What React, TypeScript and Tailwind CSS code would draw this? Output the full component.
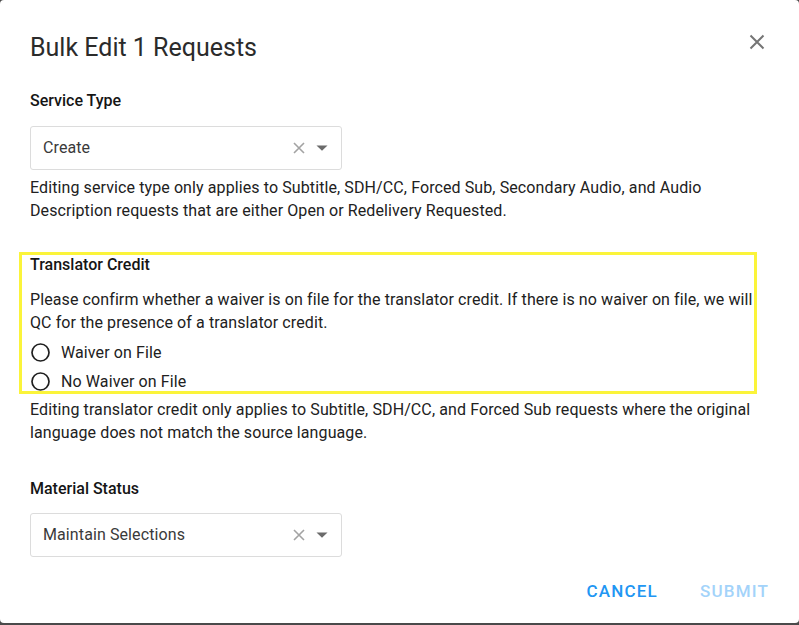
import React from "react";

function ClearIcon() {
  return (
    <svg width="12" height="12" viewBox="0 0 12 12" className="block">
      <path d="M1 1 L11 11 M11 1 L1 11" stroke="#a3a3a3" strokeWidth="1.6" fill="none" />
    </svg>
  );
}

function Arrow() {
  return (
    <svg width="12" height="6" viewBox="0 0 12 6" className="block">
      <path d="M0.5 0.5 L11.5 0.5 L6 5.8 Z" fill="#6b6b6b" />
    </svg>
  );
}

function Select({ value, className }: { value: string; className?: string }) {
  return (
    <div
      className={
        "flex h-[44px] w-[312px] items-center rounded-[3px] border border-[#dcdcdc] bg-white pl-[12px] pr-[13px] " +
        (className ?? "")
      }
    >
      <span className="flex-1 text-[16px] tracking-[0.1px] text-[#3a3a3a]">{value}</span>
      <span className="mr-[11px]">
        <ClearIcon />
      </span>
      <Arrow />
    </div>
  );
}

function Radio({ label }: { label: string }) {
  return (
    <label className="flex h-[29px] items-center">
      <svg width="21" height="21" viewBox="0 0 21 21" className="block">
        <circle cx="10.5" cy="10.5" r="8.5" stroke="#1f1f1f" strokeWidth="1.7" fill="none" />
      </svg>
      <span className="ml-[10px] text-[16px] leading-[29px] tracking-[0.1px] text-[#212121]">{label}</span>
    </label>
  );
}

export default function App() {
  return (
    <div className="h-[625px] w-[799px] overflow-hidden bg-[#4a4a4a] font-['Roboto',_'Liberation_Sans',_sans-serif]">
      <div className="relative h-[623px] rounded-[4px] bg-white px-[30px] pt-[32px]">
        <h2 className="text-[25px] font-normal leading-[32px] text-[#2b2b2b]">Bulk Edit 1 Requests</h2>
        <button className="absolute right-[30px] top-[30px] flex h-[24px] w-[24px] items-center justify-center">
          <svg width="24" height="24" viewBox="0 0 24 24" className="block">
            <path d="M5.5 5.5 L18.5 18.5 M18.5 5.5 L5.5 18.5" stroke="#757575" strokeWidth="2" fill="none" />
          </svg>
        </button>

        <div className="mt-[27px] text-[16px] font-medium leading-[20px] text-[#151515]">Service Type</div>
        <Select className="mt-[15px]" value="Create" />
        <p className="mt-[7px] text-[16px] leading-[22.88px] tracking-[0.1px] text-[#212121]">
          Editing service type only applies to Subtitle, SDH/CC, Forced Sub, Secondary Audio, and Audio Description
          requests that are either Open or Redelivery Requested.
        </p>

        <div className="relative mt-[32px]">
          <div className="pointer-events-none absolute -left-[11px] -top-[3px] bottom-[2px] right-[12px] border-[3px] border-[#fbf43a]" />
          <div className="text-[16px] font-medium leading-[20px] text-[#151515]">Translator Credit</div>
          <p className="mt-[14px] text-[16px] leading-[22.88px] tracking-[0.1px] text-[#212121]">
            Please confirm whether a waiver is on file for the translator credit. If there is no waiver on file, we will
            QC for the presence of a translator credit.
          </p>
          <div className="mt-[3px] flex flex-col">
            <Radio label="Waiver on File" />
            <Radio label="No Waiver on File" />
          </div>
        </div>
        <p className="mt-[3.5px] text-[16px] leading-[22.88px] tracking-[0.1px] text-[#212121]">
          Editing translator credit only applies to Subtitle, SDH/CC, and Forced Sub requests where the original
          language does not match the source language.
        </p>

        <div className="mt-[34px] text-[16px] font-medium leading-[20px] text-[#151515]">Material Status</div>
        <Select className="mt-[14px]" value="Maintain Selections" />

        <div className="mt-[22px] flex justify-end gap-[42px]">
          <button className="text-[17px] font-medium uppercase leading-[24px] tracking-[0.07em] text-[#2196f3]">
            Cancel
          </button>
          <button className="text-[17px] font-medium uppercase leading-[24px] tracking-[0.07em] text-[#a3d3fa]">
            Submit
          </button>
        </div>
      </div>
    </div>
  );
}
